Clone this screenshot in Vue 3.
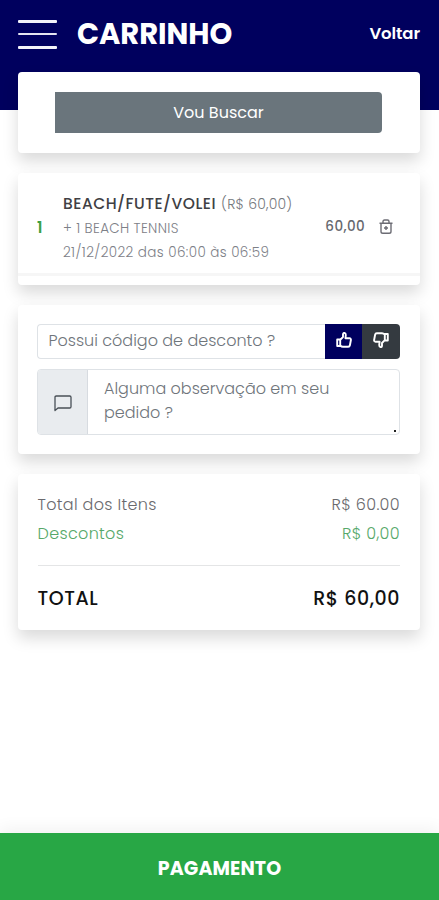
<script setup>
const lines = ['+ 1 BEACH TENNIS', '21/12/2022 das 06:00 às 06:59']
</script>

<template>
  <div class="page">
    <header class="top">
      <button class="menu" aria-label="Menu"><i></i><i></i><i></i></button>
      <h1>CARRINHO</h1>
      <a class="back">Voltar</a>
    </header>

    <main class="cards">
      <section class="card pickup">
        <button class="pickup-btn">Vou Buscar</button>
      </section>

      <section class="card items">
        <div class="item">
          <span class="qty">1</span>
          <div class="desc">
            <div class="name"><span class="strong">BEACH/FUTE/VOLEI</span><span class="unit">(R$ 60,00)</span></div>
            <div v-for="line in lines" :key="line" class="sub">{{ line }}</div>
          </div>
          <span class="price">60,00</span>
          <svg class="trash" viewBox="0 0 14 16" fill="none" stroke="#6c6c74" stroke-width="1.4">
            <path d="M.5 4.200h13M4 4V2.600Q4 1 5.500 1h3Q10 1 10 2.600V4M2 4v8.500q0 1.800 1.800 1.800h6.400q1.800 0 1.800-1.800V4M5 9h4M7 7v4" />
          </svg>
        </div>
      </section>

      <section class="card forms">
        <div class="coupon">
          <div class="field">Possui código de desconto ?</div>
          <button class="up" aria-label="Aplicar">
            <svg viewBox="0 0 16 16" fill="none" stroke="#fff" stroke-width="1.9" stroke-linejoin="round">
              <path d="M1.200 7.500h3V14h-3zM4.200 7.800 7 5V2.200Q7.200.8 8.400.9q1.500.3 1.400 2.300L9.400 6.200h4q1.700.2 1.500 1.800l-1 5.300q-.3 1.500-1.700 1.500H7q-1.500 0-2.800-1.300" />
            </svg>
          </button>
          <button class="down" aria-label="Remover">
            <svg viewBox="0 0 16 16" fill="none" stroke="#fff" stroke-width="1.9" stroke-linejoin="round">
              <path d="M14.800 8.500h-3V2h3zM11.800 8.200 9 11v2.800q-.2 1.400-1.400 1.300-1.500-.3-1.400-2.300l.4-3h-4Q.9 9.600 1.100 8l1-5.300q.3-1.500 1.700-1.500H9q1.500 0 2.800 1.300" />
            </svg>
          </button>
        </div>
        <div class="note">
          <div class="addon">
            <svg viewBox="0 0 18 17" fill="none" stroke="#495057" stroke-width="1.300" stroke-linejoin="round">
              <path d="M1 15.500V2.300Q1 1 2.300 1h13.400Q17 1 17 2.300v9.400q0 1.300-1.300 1.300H4z" />
            </svg>
          </div>
          <div class="area">
            <div>Alguma observação em seu</div>
            <div>pedido ?</div>
            <i class="grip"></i>
          </div>
        </div>
      </section>

      <section class="card totals">
        <div class="row"><span>Total dos Itens</span><span>R$ 60.00</span></div>
        <div class="row green"><span>Descontos</span><span>R$ 0,00</span></div>
        <div class="row total"><span>TOTAL</span><span>R$ 60,00</span></div>
      </section>
    </main>

    <button class="pay">PAGAMENTO</button>
  </div>
</template>

<style>
body { margin: 0; background: #fff; }
</style>

<style scoped>
.page {
  box-sizing: border-box;
  height: 900px;
  display: flex;
  flex-direction: column;
  overflow: hidden;
  background: linear-gradient(#00005e 0 110.500px, #fff 110.500px);
  font-family: Poppins, Inter, sans-serif;
  white-space: nowrap;
}
button { border: 0; padding: 0; margin: 0; font-family: inherit; background: none; }
.top { height: 72px; flex: none; display: flex; padding: 0 19px 0 18px; color: #fff; align-items: flex-start; }
.menu { width: 39px; height: 29px; margin-top: 19.500px; display: flex; flex-direction: column; justify-content: space-between; }
.menu i { height: 3px; background: #f3f3fa; border-radius: 1px; }
.menu i:nth-child(2) { height: 2px; background: #e4e4f0; }
h1 { margin: 0 auto 0 20px; font-size: 29px; line-height: 68px; font-weight: 700; letter-spacing: -0.05px; }
.back { font-size: 16.500px; line-height: 68px; font-weight: 600; letter-spacing: -0.1px; }
.cards { flex: 1; display: flex; flex-direction: column; gap: 20px; padding: 0 19px 0 18px; }
.card { box-sizing: border-box; background: #fff; border-radius: 4px; box-shadow: 0 8px 16px rgba(0, 0, 0, .15); }
.pickup { height: 81px; padding: 20px 38px 20px 37px; }
.pickup-btn { width: 100%; height: 41px; background: #6a757c; border-radius: 0 4px 4px 0; color: #fff; font-size: 16px; }
.items { height: 112px; }
.item { height: 100px; display: flex; align-items: center; border-bottom: 3px solid #f6f6f6; padding: 0 27px 0 19px; }
.qty { width: 26px; color: #3ba043; font-size: 15px; font-weight: 600; padding-top: 9px; }
.desc { flex: 1; padding-top: 9px; }
.name { line-height: 26px; display: flex; gap: 5px; }
.strong { font-size: 15.500px; font-weight: 500; color: #404044; letter-spacing: .5px; }
.unit { font-size: 14px; font-weight: 300; color: #74777c; letter-spacing: .2px; }
.sub { line-height: 24px; color: #7d8087; font-weight: 300; font-size: 13.500px; letter-spacing: .4px; }
.sub:nth-child(2) { letter-spacing: .35px; }
.price { font-size: 13.500px; font-weight: 500; color: #66686e; padding-top: 7px; margin-right: 14px; letter-spacing: .4px; }
.trash { width: 14px; height: 16px; margin-top: 7px; }
.forms { height: 149px; padding: 19px 20px 19px 19px; display: flex; flex-direction: column; gap: 10px; }
.coupon { height: 35px; display: flex; }
.field { flex: 1; box-sizing: border-box; border: 1px solid #dee2e6; border-right: 0; border-radius: 4px 0 0 4px; padding-left: 10.500px; font-size: 16px; font-weight: 300; line-height: 32px; color: #6f757b; }
.up, .down { width: 37px; display: flex; align-items: center; justify-content: center; padding-bottom: 4px; background: #00005e; }
.down { width: 38px; background: #343a40; border-radius: 0 4px 4px 0; }
.up svg, .down svg { width: 16px; height: 16px; }
.note { height: 66px; display: flex; box-sizing: border-box; border: 1px solid #dee2e6; border-radius: 4px; }
.addon { width: 50px; box-sizing: border-box; border-right: 1px solid #d7dbe0; background: #e9ecef; display: flex; align-items: center; justify-content: center; padding: 3px 0 0 1px; border-radius: 3px 0 0 3px; }
.addon svg { width: 18px; height: 17px; }
.area { flex: 1; position: relative; padding: 7px 0 0 16px; font-size: 16px; line-height: 24px; font-weight: 300; color: #6f757b; }
.grip { position: absolute; right: 3px; bottom: 2px; width: 2px; height: 2px; background: #222; }
.totals { height: 156px; padding: 16px 20px 0 19.500px; }
.row { display: flex; justify-content: space-between; height: 29px; line-height: 29px; font-size: 16px; font-weight: 300; color: #6a6a6e; letter-spacing: .33px; }
.green { color: #56a869; }
.total { margin-top: 17px; border-top: 1px solid #e4e5e6; height: 64px; line-height: 65px; font-size: 19px; font-weight: 500; color: #111; letter-spacing: .55px; }
.pay { height: 67px; flex: none; background: #28a745; color: #fff; font-size: 19px; font-weight: 700; letter-spacing: .1px; box-shadow: 0 -4px 16px rgba(0, 0, 0, .06); padding-top: 4px; }
</style>
